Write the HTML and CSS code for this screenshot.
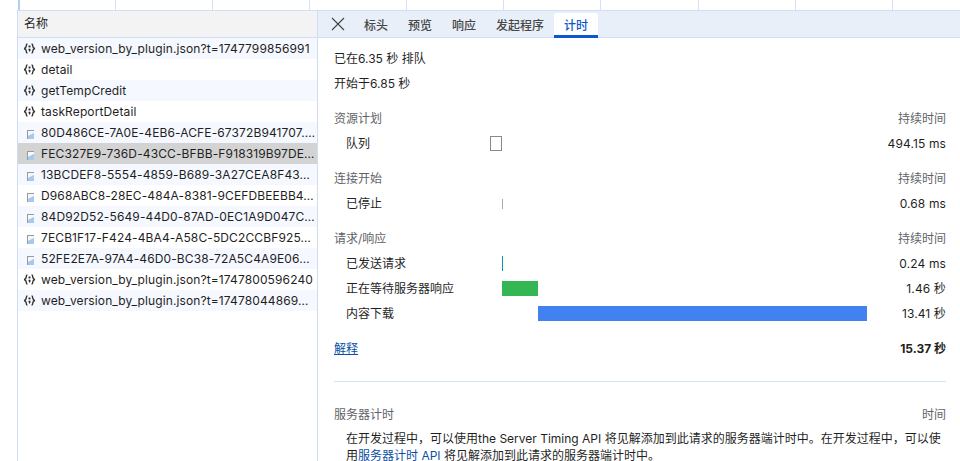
FILE: index.html
```html
<!DOCTYPE html>
<html lang="zh-CN">
<head>
<meta charset="utf-8">
<title>网络 计时</title>
<link rel="stylesheet" href="styles.css">
</head>
<body>
<svg class="defs" width="0" height="0" aria-hidden="true">
  <symbol id="json" viewBox="0 0 14 14">
    <path d="M4.8 2 C3.4 2.1 3.7 3.2 3.5 4.4 C3.3 5.8 2.8 6.6 1.2 7 C2.8 7.4 3.3 8.2 3.5 9.6 C3.7 10.8 3.4 11.9 4.8 12" fill="none" stroke="#333" stroke-width="1.5"/>
    <path d="M9.2 2 C10.6 2.1 10.3 3.2 10.5 4.4 C10.7 5.8 11.2 6.6 12.8 7 C11.2 7.4 10.7 8.2 10.5 9.6 C10.3 10.8 10.6 11.9 9.2 12" fill="none" stroke="#333" stroke-width="1.5"/>
    <rect x="6" y="3.8" width="2" height="2" fill="#222"/>
    <path d="M6 7.2 H8 V9.4 L6.6 10.8 V9.2 H6 Z" fill="#222"/>
  </symbol>
  <symbol id="img" viewBox="0 0 7 9">
    <rect x="0" y="0" width="7" height="9" fill="#c4d9f3"/>
    <path d="M0 0 H7 V1 H1 V9 H0 Z" fill="#9a9a9a"/>
    <path d="M1 1 H7 V3 L1 6 Z" fill="#f4f8fd"/>
    <path d="M1 6 L7 3 V9 H1 Z" fill="#a9c8ee"/>
  </symbol>
</svg>

<div class="strip">
  <div class="strip-cell"></div><div class="strip-cell"></div><div class="strip-cell"></div>
  <div class="strip-cell"></div><div class="strip-cell"></div><div class="strip-cell"></div>
  <div class="strip-cell"></div><div class="strip-cell"></div><div class="strip-cell"></div>
</div>

<div class="main">
  <aside class="sidebar">
    <div class="side-head">名称</div>
    <ul class="files">
      <li class="file"><svg class="icon-json"><use href="#json"/></svg><span class="name">web_version_by_plugin.json?t=1747799856991</span></li>
      <li class="file"><svg class="icon-json"><use href="#json"/></svg><span class="name">detail</span></li>
      <li class="file"><svg class="icon-json"><use href="#json"/></svg><span class="name">getTempCredit</span></li>
      <li class="file"><svg class="icon-json"><use href="#json"/></svg><span class="name">taskReportDetail</span></li>
      <li class="file"><svg class="icon-img"><use href="#img"/></svg><span class="name">80D486CE-7A0E-4EB6-ACFE-67372B941707.…</span></li>
      <li class="file selected"><svg class="icon-img"><use href="#img"/></svg><span class="name">FEC327E9-736D-43CC-BFBB-F918319B97DE…</span></li>
      <li class="file"><svg class="icon-img"><use href="#img"/></svg><span class="name">13BCDEF8-5554-4859-B689-3A27CEA8F43…</span></li>
      <li class="file"><svg class="icon-img"><use href="#img"/></svg><span class="name">D968ABC8-28EC-484A-8381-9CEFDBEEBB4…</span></li>
      <li class="file"><svg class="icon-img"><use href="#img"/></svg><span class="name">84D92D52-5649-44D0-87AD-0EC1A9D047C…</span></li>
      <li class="file"><svg class="icon-img"><use href="#img"/></svg><span class="name">7ECB1F17-F424-4BA4-A58C-5DC2CCBF925…</span></li>
      <li class="file"><svg class="icon-img"><use href="#img"/></svg><span class="name">52FE2E7A-97A4-46D0-BC38-72A5C4A9E06…</span></li>
      <li class="file"><svg class="icon-json"><use href="#json"/></svg><span class="name">web_version_by_plugin.json?t=1747800596240</span></li>
      <li class="file"><svg class="icon-json"><use href="#json"/></svg><span class="name">web_version_by_plugin.json?t=17478044869…</span></li>
    </ul>
  </aside>

  <section class="panel">
    <nav class="tabs">
      <button class="close" aria-label="关闭">
        <svg width="14" height="14" viewBox="0 0 14 14"><path d="M1 1 L13 13 M13 1 L1 13" stroke="#444" stroke-width="1.1" fill="none"/></svg>
      </button>
      <span class="tab">标头</span>
      <span class="tab">预览</span>
      <span class="tab">响应</span>
      <span class="tab">发起程序</span>
      <span class="tab active">计时</span>
    </nav>

    <div class="content">
      <p class="line">已在6.35 秒 排队</p>
      <p class="line">开始于6.85 秒</p>

      <div class="group">
        <div class="group-head"><span>资源计划</span><span>持续时间</span></div>
        <div class="row"><span class="label">队列</span><div class="track"><div class="bar queue" style="width:12px"></div></div><span class="value">494.15 ms</span></div>
      </div>

      <div class="group">
        <div class="group-head"><span>连接开始</span><span>持续时间</span></div>
        <div class="row"><span class="label">已停止</span><div class="track"><div class="bar stalled" style="margin-left:12px;width:1px"></div></div><span class="value">0.68 ms</span></div>
      </div>

      <div class="group">
        <div class="group-head"><span>请求/响应</span><span>持续时间</span></div>
        <div class="row"><span class="label">已发送请求</span><div class="track"><div class="bar sent" style="margin-left:12px;width:1px"></div></div><span class="value">0.24 ms</span></div>
        <div class="row"><span class="label">正在等待服务器响应</span><div class="track"><div class="bar waiting" style="margin-left:12px;width:36px"></div></div><span class="value">1.46 秒</span></div>
        <div class="row"><span class="label">内容下载</span><div class="track"><div class="bar download" style="margin-left:48px;width:329px"></div></div><span class="value">13.41 秒</span></div>
      </div>

      <div class="total"><a class="link" href="#">解释</a><strong>15.37 秒</strong></div>

      <hr class="divider">

      <div class="group-head"><span>服务器计时</span><span>时间</span></div>
      <p class="note">在开发过程中，可以使用the Server Timing API 将见解添加到此请求的服务器端计时中。在开发过程中，可以使<br>用<a class="plain-link" href="#">服务器计时 API</a> 将见解添加到此请求的服务器端计时中。</p>
    </div>
  </section>
</div>
</body>
</html>
```

FILE: styles.css
```css
* { box-sizing: border-box; }

html, body {
  margin: 0;
  height: 461px;
  overflow: hidden;
  background: #fff;
}

body {
  font-family: Inter, "Noto Sans CJK SC", sans-serif;
  font-size: 12px;
  color: #1f1f1f;
}

.defs { position: absolute; }

.strip {
  display: flex;
  height: 10px;
  margin-left: 18px;
}

.strip-cell {
  flex: none;
  width: 97.09px;
  border-right: 1px solid #d3e2fb;
}

.strip-cell:first-child {
  width: 98.09px;
  border-left: 2px solid #b4cdf8;
}

.main {
  display: flex;
  height: 451px;
  border-top: 1px solid #d0dff8;
  margin-left: 17px;
}

.sidebar {
  flex: none;
  width: 301px;
  border-left: 1px solid #d0dcf0;
  border-right: 1px solid #d0dcf0;
}

.side-head {
  height: 27px;
  padding: 0 6px;
  line-height: 25px;
  background: #f3f3f3;
  border-bottom: 1px solid #d0dff8;
}

.files {
  list-style: none;
  margin: 0;
  padding: 0;
}

.file {
  display: flex;
  align-items: center;
  height: 21px;
  white-space: nowrap;
  overflow: hidden;
}

.file:nth-child(odd) { background: #f5f8fe; }
.file.selected { background: #d3d3d3; }

.icon-json {
  flex: none;
  width: 13px;
  height: 13px;
  margin: 0 5px;
}

.icon-img {
  flex: none;
  width: 7px;
  height: 9px;
  margin: 3px 7px 0 9px;
}

.name {
  color: #1f1f1f;
  letter-spacing: 0.12px;
}

.panel {
  flex: 1;
  min-width: 0;
}

.tabs {
  display: flex;
  align-items: flex-end;
  height: 27px;
  background: #e8eff9;
  border-bottom: 1px solid #d0dff8;
}

.close {
  align-self: center;
  width: 36px;
  height: 14px;
  padding: 0 0 0 13px;
  border: 0;
  background: none;
  display: block;
}

.close svg { display: block; }

.tab {
  height: 24px;
  padding: 0 10px;
  line-height: 26px;
  color: #474747;
  font-weight: 500;
}

.tab.active {
  height: 25px;
  margin-bottom: -1px;
  background: #fff;
  color: #0b57d0;
  border-radius: 3px 3px 0 0;
  border-bottom: 3px solid #0b57d0;
  line-height: 26px;
}

.content {
  padding: 8px 14px 0 16px;
}

.line {
  margin: 0;
  height: 25px;
  line-height: 25px;
}

.group { margin-top: 10px; }

.group-head {
  display: flex;
  justify-content: space-between;
  height: 25px;
  line-height: 25px;
  color: #5f6368;
}

.row {
  display: flex;
  align-items: center;
  height: 25px;
  line-height: 25px;
  padding-left: 12px;
}

.label {
  flex: none;
  width: 144px;
}

.track {
  flex: none;
  width: 377px;
}

.value {
  flex: 1;
  text-align: right;
  letter-spacing: 0.12px;
}

.bar { height: 15px; }

.queue {
  border: 1px solid #888;
  background: #fff;
}

.stalled {
  height: 10px;
  margin-top: 1px;
  background: #a8a8a8;
}

.sent { background: #0099b8; }
.waiting { background: #34b655; }
.download { background: #4282f0; }

.total {
  display: flex;
  justify-content: space-between;
  height: 25px;
  line-height: 25px;
  margin-top: 10px;
}

.total strong { font-weight: 700; }

.link {
  color: #0b4fa3;
  text-decoration: underline;
}

.divider {
  height: 1px;
  margin: 20px 0;
  border: 0;
  background: #d3e0f7;
}

.note {
  margin: 3px 0 0;
  padding-left: 12px;
  line-height: 17px;
  white-space: nowrap;
}

.plain-link {
  color: #0b4fa3;
  text-decoration: none;
}
```
